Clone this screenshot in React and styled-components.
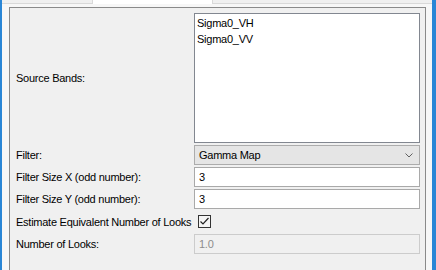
import styled, { createGlobalStyle } from 'styled-components'

const GlobalStyle = createGlobalStyle`
  html, body {
    margin: 0;
    padding: 0;
    background: #f0f0f0;
  }
  * {
    box-sizing: border-box;
  }
`

const Window = styled.div`
  width: 436px;
  height: 270px;
  overflow: hidden;
  display: flex;
  flex-direction: column;
  background: #f0f0f0;
  border-left: 2px solid #2a86d6;
  border-right: 4px solid #2a86d6;
  font-family: 'Liberation Sans', Arial, sans-serif;
  font-size: 11px;
  letter-spacing: -0.25px;
  color: #000;
`

const TabStrip = styled.div`
  display: flex;
  height: 4px;
  padding-left: 7px;
  border-bottom: 1px solid #d9d9d9;
`

const Tab = styled.div`
  width: ${(p) => p.$width}px;
  height: ${(p) => (p.$active ? 5 : 3)}px;
  background: ${(p) => (p.$active ? '#ffffff' : '#f0f0f0')};
  border-right: 1px solid #d9d9d9;
`

const Pane = styled.div`
  flex: 1;
  display: flex;
  flex-direction: column;
  padding: 3px 6px 0 7px;
  background: #f7f7f7;
`

const Panel = styled.div`
  flex: 1;
  border: 1px solid #8a8a8a;
  border-bottom: none;
  background: #f0f0f0;
  padding: 5px 5px 0 5px;
  display: grid;
  grid-template-columns: 179px 226px;
  grid-template-rows: 130px 20px 20px 20px 21px 20px;
  row-gap: 2px;
  align-items: center;
`

const Label = styled.div`
  padding-left: 1px;
  white-space: nowrap;
`

const ListBox = styled.div`
  height: 130px;
  background: #fff;
  border: 1px solid #828790;
  padding: 1px 1px;
`

const ListItem = styled.div`
  height: 16px;
  line-height: 16px;
  padding-left: 1px;
`

const Combo = styled.div`
  height: 20px;
  display: flex;
  align-items: center;
  justify-content: space-between;
  padding: 0 6px 0 4px;
  background: #e5e5e5;
  border: 1px solid #acacac;
`

const Field = styled.div`
  height: 20px;
  display: flex;
  align-items: center;
  padding-left: 4px;
  background: ${(p) => (p.$disabled ? '#f0f0f0' : '#fff')};
  border: 1px solid ${(p) => (p.$disabled ? '#cccccc' : '#a9a9a9')};
  color: ${(p) => (p.$disabled ? '#8c8c8c' : '#000')};
`

const CheckCell = styled.div`
  display: flex;
  align-items: center;
  padding-left: 4px;
`

const CheckBox = styled.div`
  width: 13px;
  height: 13px;
  border: 1px solid #333;
  background: #f4f4f4;
  display: flex;
  align-items: center;
  justify-content: center;
`

const Chevron = () => (
  <svg width="8" height="5" viewBox="0 0 8 5">
    <path d="M0.5 0.5 L4 4 L7.5 0.5" fill="none" stroke="#606060" strokeWidth="1" />
  </svg>
)

const Check = () => (
  <svg width="11" height="11" viewBox="0 0 11 11">
    <path d="M1.5 5.5 L4 8 L9.5 2" fill="none" stroke="#222" strokeWidth="1.2" />
  </svg>
)

export default function App() {
  return (
    <>
      <GlobalStyle />
      <Window>
        <TabStrip>
          <Tab $width={84} />
          <Tab $width={120} $active />
        </TabStrip>
        <Pane>
          <Panel>
            <Label>Source Bands:</Label>
            <ListBox>
              <ListItem>Sigma0_VH</ListItem>
              <ListItem>Sigma0_VV</ListItem>
            </ListBox>

            <Label>Filter:</Label>
            <Combo>
              <span>Gamma Map</span>
              <Chevron />
            </Combo>

            <Label>Filter Size X (odd number):</Label>
            <Field>3</Field>

            <Label>Filter Size Y (odd number):</Label>
            <Field>3</Field>

            <Label>Estimate Equivalent Number of Looks</Label>
            <CheckCell>
              <CheckBox>
                <Check />
              </CheckBox>
            </CheckCell>

            <Label>Number of Looks:</Label>
            <Field $disabled>1.0</Field>
          </Panel>
        </Pane>
      </Window>
    </>
  )
}
